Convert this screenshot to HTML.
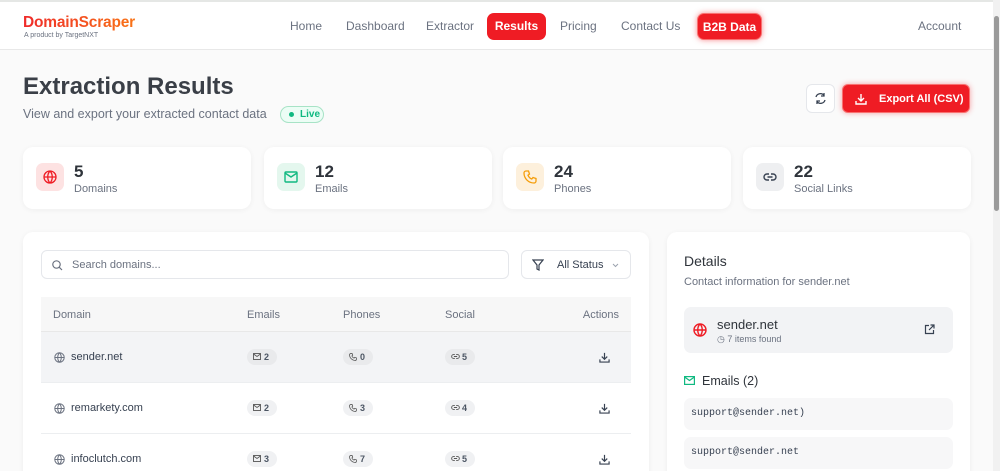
<!DOCTYPE html>
<html><head><meta charset="utf-8"><style>
*{box-sizing:border-box;margin:0;padding:0}
html{width:1000px;height:471px;overflow:hidden}
body{width:1000px;height:471px;overflow:hidden;background:#fafafa;font-family:"Liberation Sans",sans-serif;color:#374151;position:relative}
.nav{position:absolute;left:0;top:0;width:993px;height:50px;background:#fff;border-top:2px solid #e5e7e5;border-bottom:1px solid #e8e8e8}
.logo{position:absolute;left:23px;top:12px;font-size:15.5px;font-weight:bold;background:linear-gradient(90deg,#ef2b2b,#f97316);-webkit-background-clip:text;color:transparent;letter-spacing:-0.2px}
.sub{position:absolute;left:24px;top:30px;font-size:7px;color:#6b7280}
.nl{position:absolute;top:17px;font-size:12px;color:#6b7280}
.pill{position:absolute;top:11px;height:27px;border-radius:7px;background:#ef1c24;color:#fff;font-size:12px;font-weight:bold;line-height:27px;text-align:center}
.sb{position:absolute;right:0;top:0;width:7px;height:471px;background:#f1f1f1}
.sb div{position:absolute;left:1px;top:16px;width:5px;height:195px;background:#9a9a9a;border-radius:3px}
h1{position:absolute;left:23px;top:73px;font-size:24px;font-weight:bold;color:#3a3f47}
.desc{position:absolute;left:23px;top:107px;font-size:12.5px;color:#6b7280}
.live{position:absolute;left:280px;top:106px;width:44px;height:17px;border:1px solid #a7e3c6;background:#ecfdf5;border-radius:9px;font-size:10px;color:#10b981;font-weight:bold;line-height:15px;padding-left:19px}
.live:before{content:"";position:absolute;left:8px;top:5px;width:5px;height:5px;border-radius:50%;background:#10b981}
.rf{position:absolute;left:806px;top:84px;width:29px;height:29px;border:1px solid #e5e7eb;border-radius:6px;background:#fff}
.exp{position:absolute;left:842px;top:84px;width:128px;height:29px;border-radius:6px;background:#ef1c24;border:1px solid #f87171;box-shadow:0 0 6px rgba(239,28,36,.4);color:#fff;font-size:11px;font-weight:bold;line-height:29px;padding-left:36px;white-space:nowrap}
.card{position:absolute;background:#fff;border-radius:10px;box-shadow:0 1px 6px rgba(0,0,0,.05)}
.stat{top:147px;height:62px;width:228px}
.ib{position:absolute;left:13px;top:16px;width:28px;height:28px;border-radius:7px}
.num{position:absolute;left:51px;top:15px;font-size:17px;font-weight:bold;color:#2f343b}
.lab{position:absolute;left:51px;top:36px;font-size:11px;color:#6b7280}
.search{position:absolute;left:41px;top:250px;width:468px;height:29px;border:1px solid #e5e7eb;border-radius:6px;background:#fff;font-size:11px;color:#6b7280;line-height:29px;padding-left:30px}
.filter{position:absolute;left:521px;top:250px;width:110px;height:29px;border:1px solid #e5e7eb;border-radius:6px;background:#fff;font-size:11px;color:#374151;line-height:29px;padding-left:35px}
.th{position:absolute;left:41px;top:297px;width:590px;height:35px;background:#f7f7f7;border-bottom:1px solid #e8e8e8;font-size:11px;color:#6b7280}
.th span,.row span{position:absolute;top:0}
.row{position:absolute;left:41px;width:590px;height:51px;border-bottom:1px solid #eceef0;font-size:11px;color:#374151}
.badge{position:absolute;top:17px;height:16px;border-radius:8px;background:#f0f1f3;font-size:9px;font-weight:bold;color:#4b5563;line-height:16px;padding-left:17px;width:30px}
.badge svg{position:absolute;left:6px;top:4px}
.mono{font-family:"Liberation Mono",monospace;font-size:10px;color:#374151}
</style></head><body>
<div class="nav">
<div class="logo">DomainScraper</div><div class="sub">A product by TargetNXT</div>
<div class="nl" style="left:290px">Home</div>
<div class="nl" style="left:346px">Dashboard</div>
<div class="nl" style="left:426px">Extractor</div>
<div class="pill" style="left:487px;width:59px">Results</div>
<div class="nl" style="left:560px">Pricing</div>
<div class="nl" style="left:621px">Contact Us</div>
<div class="pill" style="left:697px;width:65px;border:1px solid #f87171;box-shadow:0 0 6px rgba(239,28,36,.5)">B2B Data</div>
<div class="nl" style="left:918px">Account</div>
</div>
<div class="sb"><div></div></div>
<h1>Extraction Results</h1>
<div class="desc">View and export your extracted contact data</div>
<div class="live">Live</div>
<div class="rf"><svg width="27" height="27" viewBox="0 0 27 27" fill="none" stroke="#374151" stroke-width="1.3"><path d="M9 12a4.5 4.5 0 0 1 8-1.5M18 15a4.5 4.5 0 0 1-8 1.5"/><path d="M17 8v3h-3M10 19v-3h3"/></svg></div>
<div class="exp"><svg style="position:absolute;left:12px;top:8px" width="12" height="12" viewBox="0 0 12 12" fill="none" stroke="#fff" stroke-width="1.4"><path d="M6 1v7M3 5l3 3 3-3M1 8v3h10V8"/></svg>Export All (CSV)</div>

<div class="card stat" style="left:23px"><div class="ib" style="background:#fde2e2"><svg style="position:absolute;left:7px;top:7px" width="14" height="14" viewBox="0 0 14 14" fill="none" stroke="#ef1c24" stroke-width="1.3"><circle cx="7" cy="7" r="6"/><path d="M1 7h12M7 1c-3 3-3 9 0 12M7 1c3 3 3 9 0 12"/></svg></div><div class="num">5</div><div class="lab">Domains</div></div>
<div class="card stat" style="left:264px"><div class="ib" style="background:#e4f7ee"><svg style="position:absolute;left:7px;top:8px" width="14" height="12" viewBox="0 0 14 12" fill="none" stroke="#10b981" stroke-width="1.4"><rect x="1" y="1" width="12" height="10" rx="1"/><path d="M1 2l6 4 6-4"/></svg></div><div class="num">12</div><div class="lab">Emails</div></div>
<div class="card stat" style="left:503px"><div class="ib" style="background:#fdf0dc"><svg style="position:absolute;left:7px;top:7px" width="14" height="14" viewBox="0 0 14 14" fill="none" stroke="#f59e0b" stroke-width="1.3"><path d="M3 1l2.5 0 1 3-1.5 1.2a7 7 0 0 0 3.8 3.8L10 7.5l3 1V11a2 2 0 0 1-2 2A10 10 0 0 1 1 3a2 2 0 0 1 2-2z"/></svg></div><div class="num">24</div><div class="lab">Phones</div></div>
<div class="card stat" style="left:743px"><div class="ib" style="background:#eeeff1"><svg style="position:absolute;left:7px;top:9px" width="14" height="10" viewBox="0 0 14 10" fill="none" stroke="#374151" stroke-width="1.4"><path d="M6 2H4a3 3 0 0 0 0 6h2M8 2h2a3 3 0 0 1 0 6H8M4.5 5h5"/></svg></div><div class="num">22</div><div class="lab">Social Links</div></div>

<div class="card" style="left:23px;top:232px;width:626px;height:260px"></div>
<div class="search"><svg style="position:absolute;left:10px;top:9px" width="11" height="11" viewBox="0 0 11 11" fill="none" stroke="#6b7280" stroke-width="1.2"><circle cx="4.5" cy="4.5" r="3.7"/><path d="M7.3 7.3L10 10"/></svg>Search domains...</div>
<div class="filter"><svg style="position:absolute;left:10px;top:8px" width="12" height="12" viewBox="0 0 12 12" fill="none" stroke="#374151" stroke-width="1.2"><path d="M1 1h10L7 6v5L5 10V6z"/></svg>All Status<svg style="position:absolute;left:90px;top:12px" width="7" height="5" viewBox="0 0 7 5" fill="none" stroke="#9ca3af" stroke-width="1"><path d="M1 1l2.5 2.5L6 1"/></svg></div>
<div class="th"><span style="left:12px;top:12px">Domain</span><span style="left:206px;top:12px">Emails</span><span style="left:302px;top:12px">Phones</span><span style="left:404px;top:12px">Social</span><span style="right:12px;top:12px">Actions</span></div>

<div class="row" style="top:332px;background:#f3f4f6"><svg style="position:absolute;left:13px;top:20px" width="11" height="11" viewBox="0 0 14 14" fill="none" stroke="#6b7280" stroke-width="1.3"><circle cx="7" cy="7" r="6"/><path d="M1 7h12M7 1c-3 3-3 9 0 12M7 1c3 3 3 9 0 12"/></svg><span style="left:30px;top:19px">sender.net</span><div class="badge" style="left:206px;background:#e9eaec"><svg width="8" height="7" viewBox="0 0 8 7" fill="none" stroke="#555" stroke-width="0.9"><rect x=".5" y=".5" width="7" height="6"/><path d="M.5 1l3.5 2.5L7.5 1"/></svg>2</div><div class="badge" style="left:302px;background:#e9eaec"><svg width="8" height="8" viewBox="0 0 14 14" fill="none" stroke="#555" stroke-width="1.4"><path d="M3 1h2.5l1 3-1.5 1.2a7 7 0 0 0 3.8 3.8L10 7.5l3 1V11a2 2 0 0 1-2 2A10 10 0 0 1 1 3a2 2 0 0 1 2-2z"/></svg>0</div><div class="badge" style="left:404px;background:#e9eaec"><svg width="9" height="7" viewBox="0 0 14 10" fill="none" stroke="#555" stroke-width="1.4"><path d="M6 2H4a3 3 0 0 0 0 6h2M8 2h2a3 3 0 0 1 0 6H8M4.5 5h5"/></svg>5</div><svg style="position:absolute;left:558px;top:20px" width="11" height="11" viewBox="0 0 12 12" fill="none" stroke="#374151" stroke-width="1.3"><path d="M6 1v7M3 5l3 3 3-3M1 8v3h10V8"/></svg></div>

<div class="row" style="top:383px"><svg style="position:absolute;left:13px;top:20px" width="11" height="11" viewBox="0 0 14 14" fill="none" stroke="#6b7280" stroke-width="1.3"><circle cx="7" cy="7" r="6"/><path d="M1 7h12M7 1c-3 3-3 9 0 12M7 1c3 3 3 9 0 12"/></svg><span style="left:30px;top:19px">remarkety.com</span><div class="badge" style="left:206px"><svg width="8" height="7" viewBox="0 0 8 7" fill="none" stroke="#555" stroke-width="0.9"><rect x=".5" y=".5" width="7" height="6"/><path d="M.5 1l3.5 2.5L7.5 1"/></svg>2</div><div class="badge" style="left:302px"><svg width="8" height="8" viewBox="0 0 14 14" fill="none" stroke="#555" stroke-width="1.4"><path d="M3 1h2.5l1 3-1.5 1.2a7 7 0 0 0 3.8 3.8L10 7.5l3 1V11a2 2 0 0 1-2 2A10 10 0 0 1 1 3a2 2 0 0 1 2-2z"/></svg>3</div><div class="badge" style="left:404px"><svg width="9" height="7" viewBox="0 0 14 10" fill="none" stroke="#555" stroke-width="1.4"><path d="M6 2H4a3 3 0 0 0 0 6h2M8 2h2a3 3 0 0 1 0 6H8M4.5 5h5"/></svg>4</div><svg style="position:absolute;left:558px;top:20px" width="11" height="11" viewBox="0 0 12 12" fill="none" stroke="#374151" stroke-width="1.3"><path d="M6 1v7M3 5l3 3 3-3M1 8v3h10V8"/></svg></div>

<div class="row" style="top:434px"><svg style="position:absolute;left:13px;top:20px" width="11" height="11" viewBox="0 0 14 14" fill="none" stroke="#6b7280" stroke-width="1.3"><circle cx="7" cy="7" r="6"/><path d="M1 7h12M7 1c-3 3-3 9 0 12M7 1c3 3 3 9 0 12"/></svg><span style="left:30px;top:19px">infoclutch.com</span><div class="badge" style="left:206px"><svg width="8" height="7" viewBox="0 0 8 7" fill="none" stroke="#555" stroke-width="0.9"><rect x=".5" y=".5" width="7" height="6"/><path d="M.5 1l3.5 2.5L7.5 1"/></svg>3</div><div class="badge" style="left:302px"><svg width="8" height="8" viewBox="0 0 14 14" fill="none" stroke="#555" stroke-width="1.4"><path d="M3 1h2.5l1 3-1.5 1.2a7 7 0 0 0 3.8 3.8L10 7.5l3 1V11a2 2 0 0 1-2 2A10 10 0 0 1 1 3a2 2 0 0 1 2-2z"/></svg>7</div><div class="badge" style="left:404px"><svg width="9" height="7" viewBox="0 0 14 10" fill="none" stroke="#555" stroke-width="1.4"><path d="M6 2H4a3 3 0 0 0 0 6h2M8 2h2a3 3 0 0 1 0 6H8M4.5 5h5"/></svg>5</div><svg style="position:absolute;left:558px;top:20px" width="11" height="11" viewBox="0 0 12 12" fill="none" stroke="#374151" stroke-width="1.3"><path d="M6 1v7M3 5l3 3 3-3M1 8v3h10V8"/></svg></div>

<div class="card" style="left:667px;top:232px;width:303px;height:260px">
<div style="position:absolute;left:17px;top:21px;font-size:14px;color:#2f343b">Details</div>
<div style="position:absolute;left:17px;top:44px;font-size:11px;color:#6b7280">Contact information for sender.net</div>
<div style="position:absolute;left:17px;top:75px;width:269px;height:46px;background:#f2f3f5;border-radius:7px">
<svg style="position:absolute;left:9px;top:16px" width="14" height="14" viewBox="0 0 14 14" fill="none" stroke="#ef1c24" stroke-width="1.4"><circle cx="7" cy="7" r="6"/><path d="M1 7h12M7 1c-3 3-3 9 0 12M7 1c3 3 3 9 0 12"/></svg>
<div style="position:absolute;left:33px;top:10px;font-size:13px;color:#2f343b">sender.net</div>
<div style="position:absolute;left:33px;top:27px;font-size:9px;color:#6b7280">&#9719; 7 items found</div>
<svg style="position:absolute;left:240px;top:17px" width="11" height="11" viewBox="0 0 11 11" fill="none" stroke="#374151" stroke-width="1.2"><path d="M5 1.5H1.5v8h8V6M6.5 1h3.5v3.5M10 1L5 6"/></svg>
</div>
<svg style="position:absolute;left:17px;top:144px" width="11" height="9" viewBox="0 0 11 9" fill="none" stroke="#10b981" stroke-width="1.2"><rect x=".6" y=".6" width="9.8" height="7.8"/><path d="M.6 1l4.9 3.5L10.4 1"/></svg>
<div style="position:absolute;left:35px;top:142px;font-size:12.5px;color:#2f343b">Emails (2)</div>
<div class="mono" style="position:absolute;left:17px;top:166px;width:269px;height:32px;background:#f7f7f8;border-radius:7px;line-height:32px;padding-left:7px">support@sender.net)</div>
<div class="mono" style="position:absolute;left:17px;top:205px;width:269px;height:32px;background:#f7f7f8;border-radius:7px;line-height:32px;padding-left:7px">support@sender.net</div>
</div>
</body></html>
